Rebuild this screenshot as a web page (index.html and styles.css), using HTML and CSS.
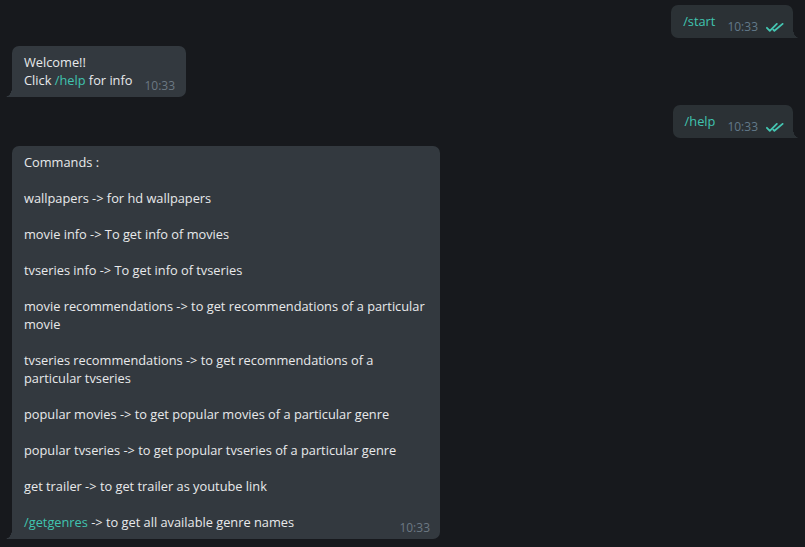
FILE: index.html
```html
<!DOCTYPE html>
<html lang="en">
<head>
<meta charset="utf-8">
<title>Chat</title>
<link rel="stylesheet" href="styles.css">
</head>
<body>
<div class="chat">
  <div class="bubble out">
    <span class="link">/start</span><span class="meta"><span class="time">10:33</span><svg class="checks" width="18" height="9" viewBox="0 0 18 9"><path d="M0.9 4.8 L3.8 7.8 L10.8 0.9" /><path d="M7.2 6.6 L8.4 7.8 L16.6 0.9" /></svg></span>
  </div>
  <div class="bubble in">
    Welcome!!<br>Click <span class="link">/help</span> for info<span class="meta"><span class="time">10:33</span></span>
  </div>
  <div class="bubble out">
    <span class="link">/help</span><span class="meta"><span class="time">10:33</span><svg class="checks" width="18" height="9" viewBox="0 0 18 9"><path d="M0.9 4.8 L3.8 7.8 L10.8 0.9" /><path d="M7.2 6.6 L8.4 7.8 L16.6 0.9" /></svg></span>
  </div>
  <div class="bubble in wide">
    Commands :<br><br>wallpapers -&gt; for hd wallpapers<br><br>movie info -&gt; To get info of movies<br><br>tvseries info -&gt; To get info of tvseries<br><br>movie recommendations -&gt; to get recommendations of a particular<br>movie<br><br>tvseries recommendations -&gt; to get recommendations of a<br>particular tvseries<br><br>popular movies -&gt; to get popular movies of a particular genre<br><br>popular tvseries -&gt; to get popular tvseries of a particular genre<br><br>get trailer -&gt; to get trailer as youtube link<br><br><span class="link">/getgenres</span> -&gt; to get all available genre names<span class="meta"><span class="time">10:33</span></span>
  </div>
</div>
</body>
</html>
```
FILE: styles.css
```css
html, body {
  margin: 0;
  padding: 0;
  background: #17191d;
  height: 100%;
  overflow: hidden;
}
body {
  font-family: "Open Sans", "Noto Sans", sans-serif;
  font-size: 12.8px;
  line-height: 18px;
  color: #e8e9eb;
}
.chat {
  display: flex;
  flex-direction: column;
  align-items: flex-start;
  gap: 8px;
  padding: 5px 12px 0 12px;
}
.bubble {
  position: relative;
  padding: 7px 11px 8px 12px;
  border-radius: 7px;
  display: flow-root;
}
.bubble.in {
  background: #33393f;
  border-bottom-left-radius: 0;
}
.bubble.in::before {
  content: "";
  position: absolute;
  left: -7px;
  bottom: 0;
  width: 7px;
  height: 9px;
  background: radial-gradient(ellipse 7px 9px at 0 0, transparent 96%, #33393f 100%);
}
.bubble.out {
  align-self: flex-end;
  background: #2b3135;
  border-bottom-right-radius: 0;
  padding-right: 9px;
}
.bubble.out::after {
  content: "";
  position: absolute;
  right: -6px;
  bottom: 0;
  width: 6px;
  height: 9px;
  background: radial-gradient(ellipse 6px 9px at 100% 0, transparent 96%, #2b3135 100%);
}
.bubble.wide {
  width: 428px;
  box-sizing: border-box;
  padding-right: 10px;
  white-space: nowrap;
}
.link {
  color: #40c4b0;
}
.meta {
  float: right;
  display: flex;
  align-items: center;
  gap: 8px;
  margin: 6px 0 -6px 12px;
  font-size: 12px;
  line-height: 18px;
}
.in .time {
  color: #6c7883;
}
.out .time {
  color: #62798a;
}
.checks {
  display: block;
  fill: none;
  stroke: #45c6b2;
  stroke-width: 1.8;
  stroke-linecap: round;
  stroke-linejoin: round;
}
```
